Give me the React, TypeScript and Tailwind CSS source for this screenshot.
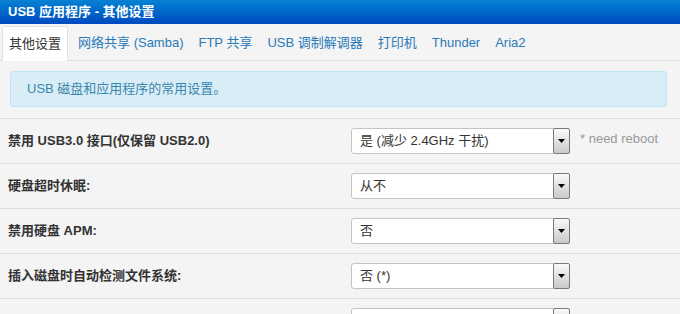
import React from 'react';

const tabs = ['其他设置', '网络共享 (Samba)', 'FTP 共享', 'USB 调制解调器', '打印机', 'Thunder', 'Aria2'];

const rows = [
  { label: '禁用 USB3.0 接口(仅保留 USB2.0)', value: '是 (减少 2.4GHz 干扰)', note: '* need reboot' },
  { label: '硬盘超时休眠:', value: '从不' },
  { label: '禁用硬盘 APM:', value: '否' },
  { label: '插入磁盘时自动检测文件系统:', value: '否 (*)' },
  { label: '', value: '' },
];

const FakeSelect = ({ value }: { value: string }) => (
  <div className="flex h-[26px] w-[219px] items-stretch rounded-[3px] border border-[#c4c4c4] bg-white">
    <span className="flex flex-1 items-center pl-[8px] text-[13px] text-[#333]">{value}</span>
    <span className="flex w-[17px] items-center justify-center rounded-[2px] border border-[#7a7a7a] bg-gradient-to-b from-[#fafafa] to-[#c9c9c9] -my-px -mr-px">
      <svg width="7" height="4" viewBox="0 0 7 4">
        <path d="M0 0h7L3.5 4z" fill="#000" />
      </svg>
    </span>
  </div>
);

export default function App() {
  return (
    <div
      className="h-[314px] w-[680px] overflow-hidden bg-[#f4f4f4]"
      style={{ fontFamily: '"Liberation Sans", "Noto Sans CJK SC", sans-serif' }}
    >
      {/* title */}
      <div className="flex h-[24px] items-center bg-gradient-to-b from-[#0a82d2] to-[#0049bf] pl-[8px] text-[13px] font-bold text-white">
        USB 应用程序 - 其他设置
      </div>

      {/* tabs */}
      <div className="flex h-[37px] items-end border-b border-[#dcdcdc] pl-[2px] pr-[4px]">
        {tabs.map((t, i) => (
          <div
            key={t}
            className={
              i === 0
                ? 'mr-[5px] -mb-px flex h-[35px] items-center rounded-t-[3px] border border-b-0 border-[#e2e2e2] bg-white px-[6px] text-[13px] text-[#333]'
                : 'mr-[5px] flex h-[35px] items-center px-[5px] text-[13px] text-[#2a7ab8]'
            }
          >
            {t}
          </div>
        ))}
      </div>

      {/* info */}
      <div className="mx-[10px] mt-[10px] mb-[11px] flex h-[36px] w-[657px] items-center rounded-[3px] border border-[#bde6f0] bg-[#d9edf7] pl-[16px] text-[13px] text-[#3a87ad]">
        USB 磁盘和应用程序的常用设置。
      </div>

      {/* rows */}
      {rows.map((r, i) => (
        <div key={i} className="flex h-[45px] items-center border-t border-[#dcdcdc]">
          <div className="w-[351px] pl-[8px] text-[13px] font-bold text-[#333]">{r.label}</div>
          <FakeSelect value={r.value} />
          {r.note && <span className="ml-[10px] -mt-[4px] text-[13px] text-[#999]">{r.note}</span>}
        </div>
      ))}
    </div>
  );
}
